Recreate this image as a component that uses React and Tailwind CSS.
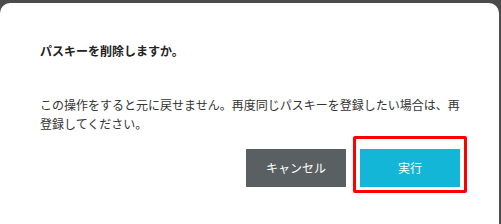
import React from 'react';

function App() {
  return (
    <div
      className="w-[501px] h-[224px] bg-[#4b4b4b] pt-[3px] overflow-hidden"
      style={{ fontFamily: '"Noto Sans CJK JP", "Noto Sans", sans-serif' }}
    >
      {/* ダイアログ本体 */}
      <div className="relative w-[499px] h-[230px] bg-white rounded-[10px] pl-[40px] pr-[36px] pt-[40px]">
        <h2 className="text-[12px] leading-[16px] font-bold text-[#222]">パスキーを削除しますか。</h2>

        <p className="mt-[36px] text-[12px] leading-[19px] text-[#333]">
          この操作をすると元に戻せません。再度同じパスキーを登録したい場合は、再登録してください。
        </p>

        <div className="mt-[16px] flex justify-end gap-[14px] pr-[3px]">
          <button className="w-[100px] h-[38px] bg-[#5a6062] text-white text-[12px]">キャンセル</button>
          <button className="w-[100px] h-[38px] bg-[#13b6d7] text-white text-[12px]">実行</button>
        </div>

        {/* 赤枠の注釈 */}
        <div className="absolute left-[353px] top-[133px] w-[114px] h-[57px] border-[3px] border-[#ff0000] rounded-[2px] pointer-events-none" />
      </div>
    </div>
  );
}

export default App;
